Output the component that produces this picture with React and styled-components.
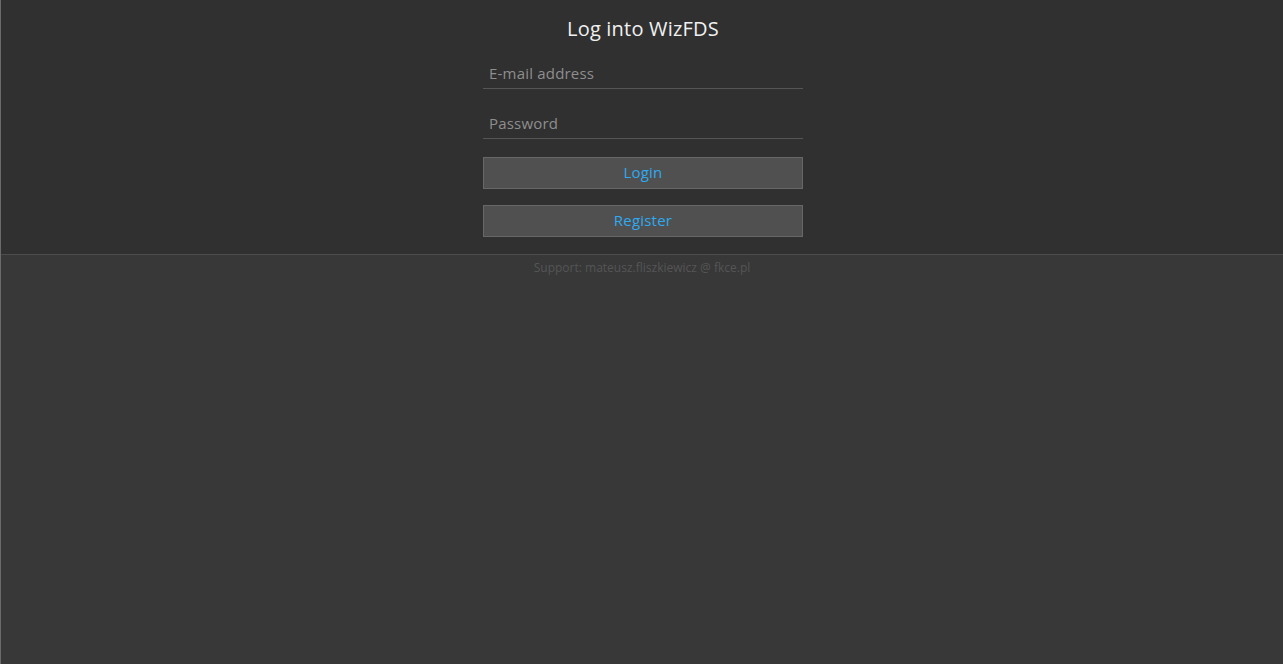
import React from "react";
import styled, { createGlobalStyle } from "styled-components";

const Global = createGlobalStyle`
  html, body { margin: 0; padding: 0; background: #ffffff; }
  body { font-family: "Open Sans", "DejaVu Sans", sans-serif; }
  * { box-sizing: border-box; }
`;

const Page = styled.div`
  height: 664px;
  display: flex;
  flex-direction: column;
  border-left: 1px solid #6a6a6a;
  background: #383838;
`;

const Top = styled.section`
  height: 255px;
  background: #303030;
  border-bottom: 1px solid #4c4c4c;
  display: flex;
  justify-content: center;
  padding-left: 2px;
`;

const Form = styled.form`
  width: 320px;
  display: flex;
  flex-direction: column;
  padding-top: 16px;
`;

const Title = styled.h1`
  margin: 0 0 17px;
  text-align: center;
  font-size: 20px;
  font-weight: 400;
  color: #f0f0f0;
  line-height: 26px;
  letter-spacing: 0.2px;
`;

const Input = styled.input`
  height: 30px;
  background: transparent;
  border: none;
  border-bottom: 1px solid #555555;
  padding: 0 6px 2px;
  font-family: inherit;
  font-size: 15px;
  letter-spacing: 0.2px;
  color: #d0d0d0;
  outline: none;
  margin-bottom: ${(p) => p.$mb || 20}px;
  &::placeholder { color: #8e8e8e; }
`;

const Button = styled.button`
  height: 32px;
  background: #505050;
  border: 1px solid #676767;
  color: #2eaaf0;
  font-family: inherit;
  font-size: 15px;
  letter-spacing: 0.2px;
  padding: 0 0 2px;
  margin-bottom: 16px;
  cursor: pointer;
`;

const Support = styled.div`
  text-align: center;
  font-size: 12px;
  color: #555555;
  padding-top: 4px;
`;

export default function App() {
  return (
    <>
      <Global />
      <Page>
        <Top>
          <Form onSubmit={(e) => e.preventDefault()}>
            <Title>Log into WizFDS</Title>
            <Input type="email" placeholder="E-mail address" />
            <Input type="password" placeholder="Password" $mb={18} />
            <Button type="submit">Login</Button>
            <Button type="button">Register</Button>
          </Form>
        </Top>
        <Support>Support: mateusz.fliszkiewicz @ fkce.pl</Support>
      </Page>
    </>
  );
}
